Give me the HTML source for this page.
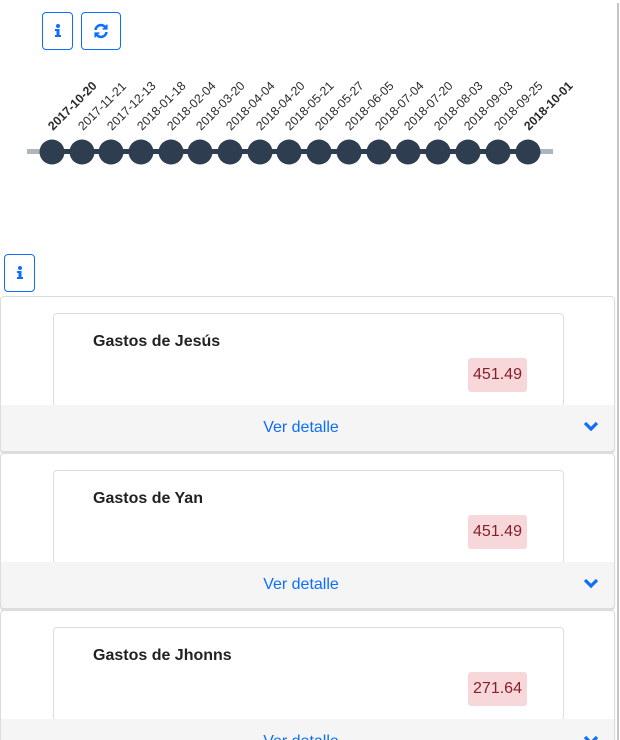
<!DOCTYPE html>
<html style="overflow:hidden;height:740px"><head><meta charset="utf-8"><style>
*{box-sizing:border-box}
body{margin:0;width:620px;height:740px;overflow:hidden;background:#fff;font-family:"Liberation Sans",sans-serif;position:relative}
.btn{position:absolute;border:1px solid #0d6efd;border-radius:4px;background:#fff;display:flex;align-items:center;justify-content:center;color:#0d6efd}
.vline{position:absolute;left:617px;top:3px;width:2px;height:740px;background:#c4c4c4}
.card{position:absolute;left:0;width:615px;height:156px;border:1px solid #dcdcdc;border-radius:4px;background:#fff;overflow:hidden;box-shadow:0 2px 1px #ddd}
.inner{position:absolute;left:52px;top:16px;width:511px;height:94px;border:1px solid #ddd;border-radius:4px;background:#fff}
.inner b{position:absolute;left:39px;top:19px;font-size:16px;color:#222}
.amt{position:absolute;left:414px;top:44px;width:59px;height:34px;background:#f8d7da;border-radius:3px;color:#842029;font-size:16px;display:flex;align-items:center;justify-content:center}
.foot{position:absolute;left:0;top:108px;width:600px;height:47px;background:#f5f5f5;text-align:center;line-height:46px;color:#0d6efd;font-size:16px}
.fbg{position:absolute;left:0;top:108px;width:100%;height:47px;background:#f5f5f5}
.chev{position:absolute;left:582px;top:15px}
</style></head><body>
<div class="vline"></div>
<div class="btn" style="left:42px;top:12px;width:31px;height:38px"><svg width="8" height="14" viewBox="0 0 8 14"><circle cx="4" cy="2" r="2" fill="#0d6efd"/><path d="M1 5h4.5v6H7v2H1v-2h1.5V7H1z" fill="#0d6efd"/></svg></div>
<div class="btn" style="left:81px;top:12px;width:40px;height:38px"><svg width="16" height="16" viewBox="0 0 16 16" fill="none" stroke="#0d6efd" stroke-width="2.6"><path d="M2.5 7A5.5 5.5 0 0 1 12.5 4.5"/><path d="M13.5 9A5.5 5.5 0 0 1 3.5 11.5"/><path d="M14 1.5v4.5h-4.5" fill="#0d6efd" stroke-width="1.2"/><path d="M2 14.5v-4.5h4.5" fill="#0d6efd" stroke-width="1.2"/></svg></div>
<svg style="position:absolute;left:0;top:0" width="620" height="200" font-family="Liberation Sans,sans-serif" font-size="12.3" fill="#2a2a2a">
<rect x="27" y="149" width="526" height="5" fill="#adb5bd"/>
<rect x="52" y="149" width="476" height="5" fill="#2e3d4f"/>
<g fill="#2e3d4f">
<circle cx="52" cy="152" r="12.5"/><circle cx="82" cy="152" r="12.5"/><circle cx="111" cy="152" r="12.5"/><circle cx="141" cy="152" r="12.5"/><circle cx="171" cy="152" r="12.5"/><circle cx="200" cy="152" r="12.5"/><circle cx="230" cy="152" r="12.5"/><circle cx="260" cy="152" r="12.5"/><circle cx="289" cy="152" r="12.5"/><circle cx="319" cy="152" r="12.5"/><circle cx="349" cy="152" r="12.5"/><circle cx="379" cy="152" r="12.5"/><circle cx="408" cy="152" r="12.5"/><circle cx="438" cy="152" r="12.5"/><circle cx="468" cy="152" r="12.5"/><circle cx="498" cy="152" r="12.5"/><circle cx="528" cy="152" r="12.5"/>
</g>
<text transform="translate(53,131) rotate(-45)" font-weight="bold">2017-10-20</text>
<text transform="translate(83,131) rotate(-45)">2017-11-21</text>
<text transform="translate(112,131) rotate(-45)">2017-12-13</text>
<text transform="translate(142,131) rotate(-45)">2018-01-18</text>
<text transform="translate(172,131) rotate(-45)">2018-02-04</text>
<text transform="translate(201,131) rotate(-45)">2018-03-20</text>
<text transform="translate(231,131) rotate(-45)">2018-04-04</text>
<text transform="translate(261,131) rotate(-45)">2018-04-20</text>
<text transform="translate(290,131) rotate(-45)">2018-05-21</text>
<text transform="translate(320,131) rotate(-45)">2018-05-27</text>
<text transform="translate(350,131) rotate(-45)">2018-06-05</text>
<text transform="translate(380,131) rotate(-45)">2018-07-04</text>
<text transform="translate(409,131) rotate(-45)">2018-07-20</text>
<text transform="translate(439,131) rotate(-45)">2018-08-03</text>
<text transform="translate(469,131) rotate(-45)">2018-09-03</text>
<text transform="translate(499,131) rotate(-45)">2018-09-25</text>
<text transform="translate(529,131) rotate(-45)" font-weight="bold">2018-10-01</text>
</svg>
<div class="btn" style="left:4px;top:254px;width:31px;height:38px"><svg width="8" height="14" viewBox="0 0 8 14"><circle cx="4" cy="2" r="2" fill="#0d6efd"/><path d="M1 5h4.5v6H7v2H1v-2h1.5V7H1z" fill="#0d6efd"/></svg></div>

<div class="card" style="top:296px"><div class="inner"><b>Gastos de Jesús</b><div class="amt">451.49</div></div><div class="fbg"></div><div class="foot">Ver detalle</div><svg class="chev" style="top:123px" width="16" height="12" viewBox="0 0 16 12"><path d="M2 3l6 6 6-6" fill="none" stroke="#0d6efd" stroke-width="3.2"/></svg></div>
<div class="card" style="top:453px"><div class="inner"><b>Gastos de Yan</b><div class="amt">451.49</div></div><div class="fbg"></div><div class="foot">Ver detalle</div><svg class="chev" style="top:123px" width="16" height="12" viewBox="0 0 16 12"><path d="M2 3l6 6 6-6" fill="none" stroke="#0d6efd" stroke-width="3.2"/></svg></div>
<div class="card" style="top:610px"><div class="inner"><b>Gastos de Jhonns</b><div class="amt">271.64</div></div><div class="fbg"></div><div class="foot">Ver detalle</div><svg class="chev" style="top:123px" width="16" height="12" viewBox="0 0 16 12"><path d="M2 3l6 6 6-6" fill="none" stroke="#0d6efd" stroke-width="3.2"/></svg></div>
</body></html>
